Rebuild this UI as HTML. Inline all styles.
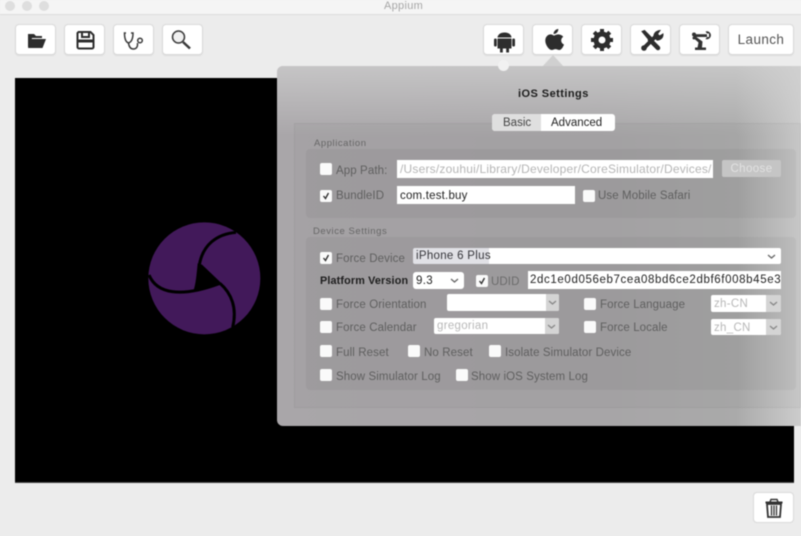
<!DOCTYPE html>
<html><head><meta charset="utf-8"><style>
html,body{margin:0;padding:0;width:801px;height:536px;overflow:hidden;background:#ececec;font-family:"Liberation Sans",sans-serif}
div,span{position:absolute;box-sizing:border-box}
#w{left:0;top:0;width:801px;height:536px;overflow:hidden;filter:blur(.5px)}
.b{top:24px;height:31px;background:#fff;border:1px solid #d9d9d9;border-radius:4px;box-shadow:0 1px 1px #ddd}
.b svg{position:absolute;left:0;top:0}
.t{font-size:11.5px;letter-spacing:.1px;color:#5f5f5f;white-space:nowrap;line-height:14px}
.c{width:12px;height:12px;background:#fafafa;border-radius:2px}
.c svg{position:absolute;left:0;top:0}
.i{background:#fff;font-size:11.5px;letter-spacing:.2px;line-height:19px;white-space:nowrap;overflow:hidden;padding-left:2px;color:#222}
.s{background:#fff;border-radius:2px;font-size:11.5px;line-height:19px;padding-left:3px;letter-spacing:.3px;color:#222;overflow:hidden;white-space:nowrap}
.a{right:0;top:0;bottom:0;width:19px;background:#d4d4d4}
.s svg{position:absolute;right:5px;top:6px}
</style></head><body><div id="w">
<div style="left:0;top:0;width:801px;height:15px;background:#f5f5f5;border-bottom:1px solid #dcdcdc"></div>
<div style="left:5px;top:1px;width:10px;height:10px;border-radius:50%;background:#dedede"></div>
<div style="left:22px;top:1px;width:10px;height:10px;border-radius:50%;background:#dedede"></div>
<div style="left:39px;top:1px;width:10px;height:10px;border-radius:50%;background:#dedede"></div>
<div style="left:384px;top:0;font-size:11px;letter-spacing:.3px;color:#a6a6a6;line-height:13px">Appium</div>

<div class="b" style="left:15px;width:41px"><svg width="41" height="31" fill="#2d2d2d"><path d="M12 9h6l2 2h6v2H16l-3 9h-1z"/><path d="M15 14h15l-3.500 9H12z"/></svg></div>
<div class="b" style="left:64px;width:41px"><svg width="41" height="31" fill="none" stroke="#2d2d2d" stroke-width="2"><path d="M13.500 7h12l3 3v12a1.500 1.500 0 0 1-1.500 1.500H14a1.500 1.500 0 0 1-1.500-1.500V8z"/><path d="M13 16h15" stroke-width="3"/><path d="M17 7v5h7V7"/></svg></div>
<div class="b" style="left:113px;width:41px"><svg width="41" height="31" fill="none" stroke="#3a3a3a" stroke-width="1.500"><path d="M12 8h-1.500c0 5 1 9 4 10 3-1 4.500-5 4.500-10H17"/><path d="M14.500 18c.5 4 2.500 6 5 6 3 0 4-2.500 4-4v-2"/><circle cx="26" cy="15.500" r="2.300"/></svg></div>
<div class="b" style="left:162px;width:41px"><svg width="41" height="31" fill="none" stroke="#3a3a3a"><circle cx="15.500" cy="12" r="6" stroke-width="1.500" fill="#f0f0f0"/><path d="M20 17l7 6.500" stroke-width="2.500"/></svg></div>

<div class="b" style="left:483px;width:41px"><svg width="41" height="31" fill="#2d2d2d"><path d="M13.500 12.500c.3-3 3-5 7-5s6.700 2 7 5z"/><path d="M13.500 13.500h14v10h-2.500v4h-2.800v-4h-3.400v4H16v-4h-2.500z"/><rect x="10" y="13.500" width="2.800" height="8" rx="1.400"/><rect x="28.200" y="13.500" width="2.800" height="8" rx="1.400"/></svg></div>
<div class="b" style="left:532px;width:41px"><svg width="41" height="31" fill="#2d2d2d"><g transform="translate(-2 -2) scale(1.100)"><path d="M21 11.500c1.500-.8 3-1.300 4.500-1.100 1.600.1 3 .9 3.800 2.100-2.800 1.800-2.300 5.800.7 7-.8 2.300-2.500 5-4.200 5-1.300 0-2-.8-3.500-.8s-2.200.8-3.500.8c-2.500 0-5.800-4.700-5.800-8.500 0-3.800 2.600-5.700 4.800-5.700 1.100 0 2 .6 3.200 1.200z"/><path d="M20.500 10c0-2.500 1.800-4.200 4.300-4.700.2 2.700-1.800 4.600-4.300 4.700z"/></g></svg></div>
<div class="b" style="left:581px;width:41px"><svg width="41" height="31"><circle cx="20" cy="15" r="6" fill="none" stroke="#2d2d2d" stroke-width="5"/><g stroke="#2d2d2d" stroke-width="4"><path d="M20 4v4M20 22v4M9 15h4M27 15h4M12.200 7.200l3 3M24.800 19.800l3 3M27.800 7.200l-3 3M15.200 19.800l-3 3"/></g></svg></div>
<div class="b" style="left:630px;width:41px"><svg width="41" height="31" fill="#2d2d2d" stroke="#2d2d2d" stroke-linecap="round"><path d="M11 6.500l2.500-1 7 7-2.500 2.500z" stroke-width="1"/><path d="M19 15l8 8" stroke-width="4.500" fill="none"/><path d="M13 23l12-12" stroke-width="4" fill="none"/><path d="M23 12c-.5-3 1.500-6 6-6.500l-2.500 3.500 2 2 3.500-2c.2 4-3 6.500-6 6z" stroke-width="1"/><circle cx="13" cy="23" r="2.800" stroke="none"/></svg></div>
<div class="b" style="left:679px;width:41px"><svg width="41" height="31" fill="#333"><path d="M15 22.500h11v2.500H15z"/><path d="M17.500 22.500l1-5-4.500-4 1-2.500 7.500 5.500-.5 6z"/><path d="M14 9.200h13v2.800H14z"/><circle cx="14" cy="9.500" r="2"/><circle cx="14" cy="13" r="1.500"/><path d="M25.500 6.500a4 4 0 1 1 0 7.500l1.500-2h2V8.500h-2z"/></svg></div>
<div class="b" style="left:728px;width:66px;font-size:13.500px;line-height:29px;text-align:center;color:#555;letter-spacing:.4px">Launch</div>

<div style="left:15px;top:78px;width:779px;height:405px;background:#000;border-bottom:1px solid #444"></div>
<svg style="position:absolute;left:130px;top:200px" width="150" height="150" viewBox="0 0 450 450">
<circle cx="223" cy="235" r="168" fill="#42195a"/>
<g fill="none" stroke="#000" stroke-width="9"><path d="M318 97C260 102 218 135 208 195"/><path d="M57 225C80 280 150 295 270 250"/><path d="M270 250C305 280 322 325 308 382"/></g>
<path d="M203 190L216 194L275 250C245 262 215 272 190 274C198 250 200 220 203 190z" fill="#000"/>
</svg>

<div style="left:753px;top:492px;width:41px;height:31px;background:#fff;border:1px solid #d9d9d9;border-radius:4px"><svg width="41" height="31" fill="none" stroke="#333" style="position:absolute;left:0;top:0"><path d="M11.500 9.500h17" stroke-width="2"/><path d="M16 9l1-2.500h6l1 2.500" stroke-width="1.500"/><path d="M13 11h14l-1 13H14z" stroke-width="1.800"/><path d="M17.500 12.500v10M20 12.500v10M22.500 12.500v10" stroke-width="1.300"/></svg></div>

<svg style="position:absolute;left:540px;top:54px" width="28" height="14"><path d="M1 14L13 1L25 14z" fill="#d0d0d0"/></svg>

<div style="left:277px;top:66px;width:540px;height:360px;border-radius:6px;background:linear-gradient(90deg,#a9a6a9 0%,#a7a5a7 60%,#aaaaaa 85%,#cccccc 97%)"></div>
<div style="left:277px;top:66px;width:524px;height:70px;border-radius:6px 0 0 0;background:linear-gradient(180deg,rgba(210,210,210,.7),rgba(205,205,205,0))"></div>
<div style="left:498px;top:60px;width:11px;height:11px;border-radius:50%;background:#f1f1f1"></div>
<div style="left:294px;top:123px;width:507px;height:285px;background:rgba(0,0,0,.025);border:1px solid rgba(0,0,0,.035)"></div>
<div style="left:306px;top:149px;width:490px;height:69px;background:rgba(0,0,0,.04);border-radius:4px"></div>
<div style="left:306px;top:237px;width:490px;height:153px;background:rgba(0,0,0,.04);border-radius:4px"></div>

<div style="left:518px;top:87px;font-size:11px;font-weight:bold;letter-spacing:.45px;color:#1c1c1c;line-height:14px">iOS Settings</div>
<div style="left:492px;top:114px;width:123px;height:17px;background:#fff;border-radius:3px;overflow:hidden"><span style="left:0;top:0;width:49px;height:17px;background:#dfdfdf"></span><span style="left:11px;top:1px;font-size:11.500px;line-height:16px;color:#444">Basic</span><span style="left:59px;top:1px;font-size:11.500px;line-height:16px;color:#222">Advanced</span></div>

<div class="t" style="left:314px;top:137px;font-size:9.500px;letter-spacing:.55px;color:#666">Application</div>
<div class="t" style="left:313px;top:225px;font-size:9.500px;letter-spacing:.55px;color:#666">Device Settings</div>

<div class="c" style="left:320px;top:163px"></div><div class="t" style="left:336px;top:164px">App Path:</div>
<div class="i" style="left:397px;top:160px;width:316px;height:18px;color:#b5b5b5;font-size:12px;padding-left:3px">/Users/zouhui/Library/Developer/CoreSimulator/Devices/</div>
<div style="left:722px;top:160px;width:59px;height:17px;background:#c5c5c5;border-radius:2px;text-align:center;font-size:11.500px;line-height:18px;color:#e2e2e2;letter-spacing:.4px">Choose</div>

<div class="c" style="left:320px;top:190px"><svg width="12" height="12" fill="none" stroke="#333" stroke-width="1.400"><path d="M3.500 6l2 2.500L8.500 3"/></svg></div><div class="t" style="left:336px;top:189px">BundleID</div>
<div class="i" style="left:397px;top:186px;width:178px;height:18px;font-size:11.500px;color:#222;padding-left:3px;line-height:20px">com.test.buy</div>
<div class="c" style="left:583px;top:190px"></div><div class="t" style="left:598px;top:189px">Use Mobile Safari</div>

<div class="c" style="left:320px;top:252px"><svg width="12" height="12" fill="none" stroke="#333" stroke-width="1.400"><path d="M3.500 6l2 2.500L8.500 3"/></svg></div><div class="t" style="left:336px;top:252px">Force Device</div>
<div class="s" style="left:413px;top:248px;width:368px;height:16px;line-height:17px">iPhone 6 Plus<svg width="9" height="6" fill="none" stroke="#666" stroke-width="1.300"><path d="M1 1l3.500 3L8 1"/></svg></div>
<span style="left:413px;top:248px;width:76px;height:16px;background:rgba(120,120,140,.22)"></span>

<div class="t" style="left:320px;top:274px;font-weight:bold;color:#1d1d1d;font-size:10.800px;letter-spacing:.15px">Platform Version</div>
<div class="s" style="left:413px;top:272px;width:51px;height:17px;border-radius:3px">9.3<svg width="9" height="6" fill="none" stroke="#666" stroke-width="1.300"><path d="M1 1l3.500 3L8 1"/></svg></div>
<div class="c" style="left:476px;top:275px"><svg width="12" height="12" fill="none" stroke="#333" stroke-width="1.400"><path d="M3.500 6l2 2.500L8.500 3"/></svg></div><div class="t" style="left:491px;top:275px;color:#6b6b6b">UDID</div>
<div class="i" style="left:528px;top:271px;width:253px;height:18px;font-size:11.500px;letter-spacing:.62px;line-height:19px;padding-left:2px">2dc1e0d056eb7cea08bd6ce2dbf6f008b45e3</div>

<div class="c" style="left:320px;top:298px"></div><div class="t" style="left:336px;top:298px">Force Orientation</div>
<div class="s" style="left:447px;top:294px;width:112px;height:17px"><span class="a" style="width:13px"></span><svg width="9" height="6" fill="none" stroke="#888" stroke-width="1.300" style="right:2px"><path d="M1 1l3.500 3L8 1"/></svg></div>
<div class="c" style="left:584px;top:298px"></div><div class="t" style="left:600px;top:298px">Force Language</div>
<div class="s" style="left:711px;top:295px;width:70px;height:17px;color:#b8b8b8"><span class="a" style="width:15px"></span>zh-CN<svg width="9" height="6" fill="none" stroke="#888" stroke-width="1.300" style="right:3px"><path d="M1 1l3.500 3L8 1"/></svg></div>

<div class="c" style="left:320px;top:321px"></div><div class="t" style="left:336px;top:321px">Force Calendar</div>
<div class="s" style="left:434px;top:318px;width:125px;height:16px;line-height:17px;color:#b8b8b8"><span class="a" style="width:14px"></span>gregorian<svg width="9" height="6" fill="none" stroke="#888" stroke-width="1.300" style="right:3px"><path d="M1 1l3.500 3L8 1"/></svg></div>
<div class="c" style="left:584px;top:321px"></div><div class="t" style="left:600px;top:321px">Force Locale</div>
<div class="s" style="left:711px;top:319px;width:70px;height:16px;line-height:18px;color:#b8b8b8"><span class="a" style="width:15px"></span>zh_CN<svg width="9" height="6" fill="none" stroke="#888" stroke-width="1.300" style="right:3px"><path d="M1 1l3.500 3L8 1"/></svg></div>

<div class="c" style="left:320px;top:345px"></div><div class="t" style="left:336px;top:346px">Full Reset</div>
<div class="c" style="left:408px;top:345px"></div><div class="t" style="left:424px;top:346px">No Reset</div>
<div class="c" style="left:489px;top:345px"></div><div class="t" style="left:505px;top:346px">Isolate Simulator Device</div>

<div class="c" style="left:320px;top:369px"></div><div class="t" style="left:336px;top:370px">Show Simulator Log</div>
<div class="c" style="left:456px;top:369px"></div><div class="t" style="left:471px;top:370px">Show iOS System Log</div>
</div></body></html>
